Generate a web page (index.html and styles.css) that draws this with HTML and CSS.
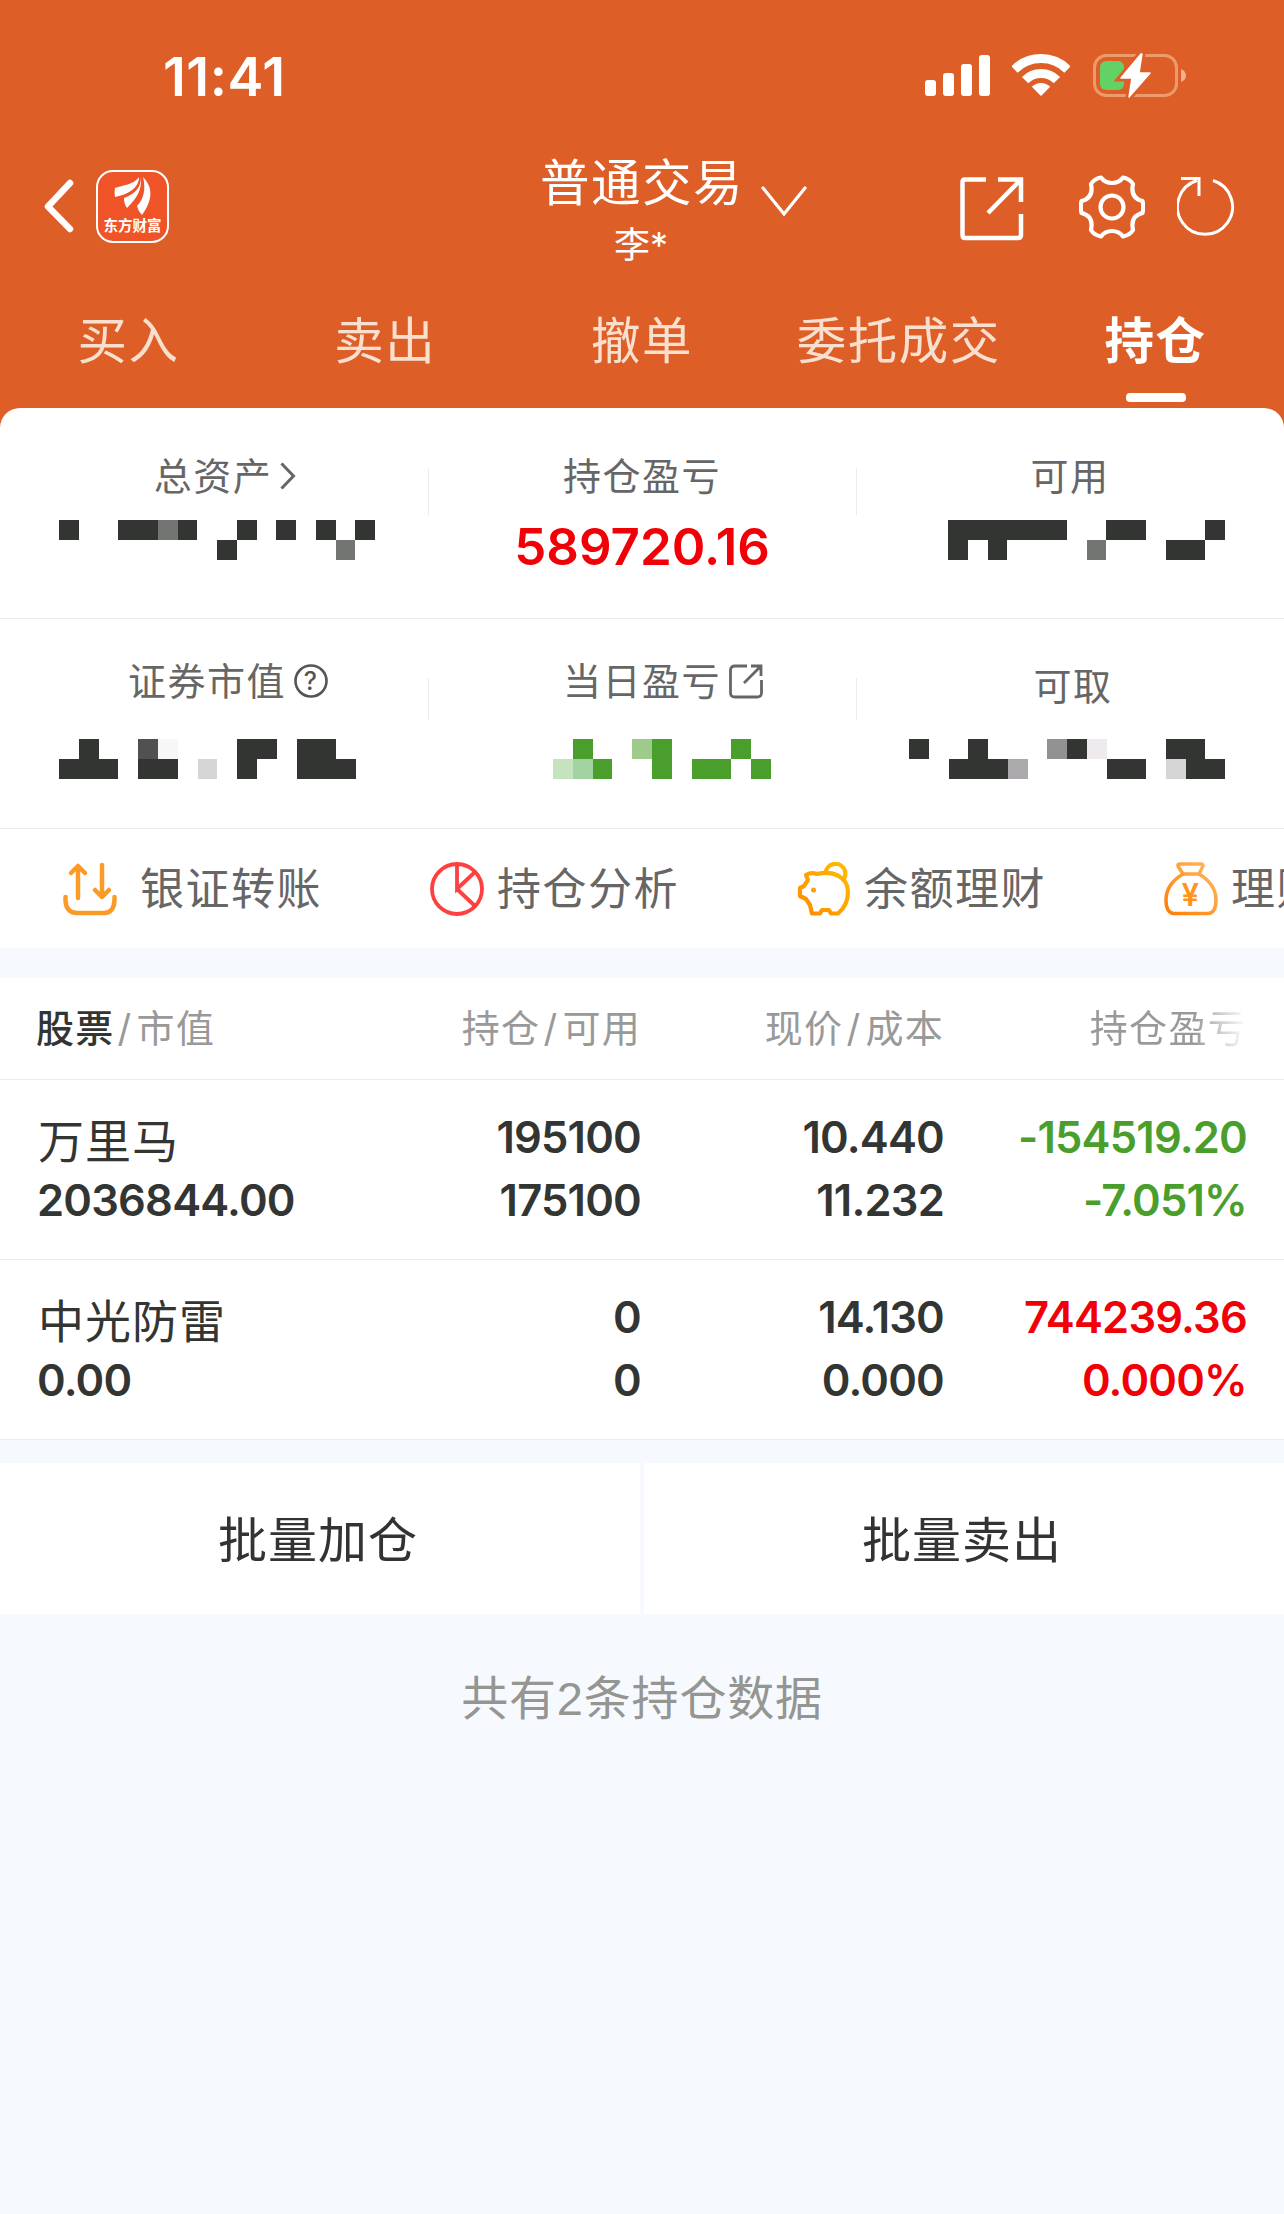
FILE: index.html
```html
<!DOCTYPE html>
<html lang="zh">
<head>
  <meta charset="UTF-8">
  <title>普通交易</title>
  <link rel="stylesheet" href="styles.css">
</head>
<body>

<header class="header">
  <div class="status-bar">
    <span class="time">11:41</span>
    <div class="status-icons">
      <svg class="signal" width="65" height="41" viewBox="0 0 65 41" fill="#fff">
        <rect x="0" y="25" width="11" height="16" rx="3"/>
        <rect x="18" y="18" width="11" height="23" rx="3"/>
        <rect x="36" y="9" width="11" height="32" rx="3"/>
        <rect x="54" y="0" width="11" height="41" rx="3"/>
      </svg>
      <svg class="wifi" width="58" height="42" viewBox="0 0 58 42">
        <g fill="none" stroke="#fff" stroke-width="9">
          <path d="M2.5 15.5A37.5 37.5 0 0 1 55.5 15.5"/>
          <path d="M13.1 26.1A22.5 22.5 0 0 1 44.9 26.1"/>
        </g>
        <path fill="#fff" d="M29 42L19.8 32.8A13 13 0 0 1 38.2 32.8Z"/>
      </svg>
      <svg width="94" height="46" viewBox="0 0 94 46">
        <rect x="1.5" y="3.5" width="82" height="40" rx="12" fill="none" stroke="#eb9c6d" stroke-width="3"/>
        <path d="M88 17Q93 19 93 23.500T88 30Z" fill="#f0af90"/>
        <rect x="7" y="9" width="24" height="29" rx="6" fill="#63d163"/>
        <path d="M48 2L28 26H39L36 45L57 21H46L49 2Z" fill="#fff" stroke="#de5e28" stroke-width="7"/>
        <path d="M48 2L28 26H39L36 45L57 21H46L49 2Z" fill="#fff" stroke="#fff" stroke-width="1.500" stroke-linejoin="round"/>
      </svg>
    </div>
  </div>

  <div class="nav">
    <div class="nav-left">
      <svg width="32" height="56" viewBox="0 0 32 56" fill="none" stroke="#fff" stroke-width="6.500" stroke-linecap="round" stroke-linejoin="round">
        <path d="M27 5L5 28.500L27 51"/>
      </svg>
      <div class="logo">
        <svg width="38" height="40" viewBox="0 0 38 40" fill="#fff">
          <path d="M1 12C9 9 19 9 25 1C25 12 15 18 1 21Q0 16 1 12Z"/>
          <path d="M27 1C28 14 23 22 13 32Q10 28 10 22C20 18 27 13 27 1Z"/>
          <path d="M29 1C40 12 38 25 28 39Q24 35 23 30C30 23 32 12 29 1Z"/>
        </svg>
        <span>东方财富</span>
      </div>
    </div>
    <div class="nav-title">
      <div class="title">普通交易</div>
      <div class="user">李*</div>
      <svg class="title-arrow" width="46" height="31" viewBox="0 0 46 31" fill="none" stroke="#fff" stroke-width="3.200" stroke-linecap="round">
        <path d="M2 2L23 28L44 2"/>
      </svg>
    </div>
    <div class="nav-right">
      <svg class="icon-share" width="64" height="64" viewBox="0 0 64 64" fill="none" stroke="#fff" stroke-width="4.500">
        <path d="M26 2.500H5Q2.500 2.500 2.500 5V58Q2.500 61 5 61H58Q61 61 61 58V37"/>
        <path d="M38 2.500H61V25M61 2.500L28 36"/>
      </svg>
      <svg class="icon-gear" width="66" height="64" viewBox="0 0 66 64" fill="none" stroke="#fff" stroke-width="4.200" stroke-linejoin="round">
        <path d="M22 2.500Q26 8 33 8T44 2.500Q51 4 54 9Q51 23 63.500 26Q65 32 63.500 38Q51 41 54 55Q51 60 44 61.500Q40 56 33 56T22 61.500Q15 60 12 55Q15 41 2.500 38Q1 32 2.500 26Q15 23 12 9Q15 4 22 2.500Z"/>
        <circle cx="33" cy="32" r="11.500"/>
      </svg>
      <svg class="icon-refresh" width="60" height="60" viewBox="0 0 60 60" fill="none" stroke="#fff" stroke-width="3">
        <path d="M36 4.500A27.500 27.500 0 1 1 20 4.500"/>
        <path d="M4 2.500H22V20"/>
      </svg>
    </div>
  </div>

  <nav class="tabs">
    <a class="tab">买入</a>
    <a class="tab">卖出</a>
    <a class="tab">撤单</a>
    <a class="tab">委托成交</a>
    <a class="tab active">持仓</a>
  </nav>
</header>

<section class="summary">
  <div class="summary-row">
    <div class="cell">
      <div class="label label-total">总资产
        <svg width="16" height="28" viewBox="0 0 16 28" fill="none" stroke="#666" stroke-width="3"><path d="M1.500 1.500L13.500 14L1.500 26.500"/></svg>
      </div>
      <svg class="mask mask-left" width="316" height="40" viewBox="0 0 16 2" preserveAspectRatio="none" shape-rendering="crispEdges">
        <path fill="#333532" d="M0 0h1v1H0zM3 0h2v1H3zM6 0h1v1H6zM9 0h1v1H9zM11 0h1v1H11zM13 0h1v1H13zM15 0h1v1H15zM8 1h1v1H8z"/>
        <path fill="#737572" d="M5 0h1v1H5zM14 1h1v1H14z"/>
      </svg>
    </div>
    <div class="cell">
      <div class="label">持仓盈亏</div>
      <div class="profit red">589720.16</div>
    </div>
    <div class="cell">
      <div class="label">可用</div>
      <svg class="mask mask-available" width="277" height="40" viewBox="0 0 14 2" preserveAspectRatio="none" shape-rendering="crispEdges">
        <path fill="#333532" d="M0 0h6v1H3v1H2V1H1v1H0zM8 0h2v1H8zM13 0h1v1H13zM11 1h2v1H11z"/>
        <path fill="#737572" d="M7 1h1v1H7z"/>
      </svg>
    </div>
  </div>

  <div class="summary-row second">
    <div class="cell">
      <div class="label label-market">证券市值
        <svg width="34" height="34" viewBox="0 0 34 34"><circle cx="17" cy="17" r="15.500" fill="none" stroke="#555" stroke-width="2.600"/><text class="question" x="17" y="26" text-anchor="middle">?</text></svg>
      </div>
      <svg class="mask mask-left" width="297" height="40" viewBox="0 0 15 2" preserveAspectRatio="none" shape-rendering="crispEdges">
        <path fill="#333532" d="M1 0h1v1h1v1H0V1h1zM4 1h2v1H4zM9 0h2v1h-1v1H9zM12 0h2v1h1v1h-3z"/>
        <path fill="#515151" d="M4 0h1v1H4z"/>
        <path fill="#f7f7f7" d="M5 0h1v1H5z"/>
        <path fill="#d6d6d6" d="M7 1h1v1H7z"/>
      </svg>
    </div>
    <div class="cell">
      <div class="label label-day">当日盈亏
        <svg width="34" height="35" viewBox="0 0 34 35" fill="none" stroke="#666" stroke-width="2.800"><path d="M18 2H6Q1.500 2 1.500 6V29Q1.500 33 6 33H28Q32.500 33 32.500 29V16M22 2H32V12M32 2L15 19"/></svg>
      </div>
      <svg class="mask mask-day" width="218" height="40" viewBox="0 0 11 2" preserveAspectRatio="none" shape-rendering="crispEdges">
        <path fill="#4a9e2b" d="M1 0h1v1H1zM2 1h1v1H2zM5 0h1v2H5zM9 0h1v1H9zM7 1h2v1H7zM10 1h1v1H10z"/>
        <path fill="#9ecb8c" d="M4 0h1v1H4z"/>
        <path fill="#c6e3bf" d="M0 1h1v1H0z"/>
        <path fill="#a3d3a0" d="M1 1h1v1H1z"/>
      </svg>
    </div>
    <div class="cell">
      <div class="label label-cash">可取</div>
      <svg class="mask mask-cash" width="316" height="40" viewBox="0 0 16 2" preserveAspectRatio="none" shape-rendering="crispEdges">
        <path fill="#333532" d="M0 0h1v1H0zM3 0h1v1h1v1H2V1h1zM8 0h1v1H8zM10 1h2v1h-2zM13 0h2v1h1v1h-2V1h-1z"/>
        <path fill="#aba9ab" d="M5 1h1v1H5z"/>
        <path fill="#949194" d="M7 0h1v1H7z"/>
        <path fill="#eeeaee" d="M9 0h1v1H9z"/>
        <path fill="#d6d6d6" d="M13 1h1v1h-1z"/>
      </svg>
    </div>
  </div>

  <div class="actions">
    <div class="action action-transfer">
      <svg width="56" height="54" viewBox="0 0 56 54" fill="none" stroke="#fb9b27" stroke-width="4.500" stroke-linecap="round" stroke-linejoin="round">
        <path d="M15 36V4M8 11L15 4L22 11M39 3V35M32 28L39 35L46 28M2.500 35V38Q3 51 14 51H41Q51 51 51.500 38V35"/>
      </svg>
      <span>银证转账</span>
    </div>
    <div class="action">
      <svg width="54" height="54" viewBox="0 0 54 54" fill="none" stroke="#ff4040" stroke-width="3.800">
        <circle cx="27" cy="27" r="25"/>
        <path d="M27 2V27L45 10M27 27L45 44"/>
      </svg>
      <span>持仓分析</span>
    </div>
    <div class="action">
      <svg width="54" height="54" viewBox="0 0 54 54" fill="none" stroke="url(#pig)" stroke-width="4.200" stroke-linejoin="round">
        <defs>
          <linearGradient id="pig" x1="0" y1="54" x2="54" y2="0" gradientUnits="userSpaceOnUse"><stop offset="0" stop-color="#ff8800"/><stop offset="1" stop-color="#ffbf00"/></linearGradient>
        </defs>
        <path d="M9 13Q14 10 20 12C36 8 51 15 51 30Q51 43 41 51.500H34L32 48H25L23 51.500H15L13 43L9 37L3 34V26L7 24L11 18Z"/>
        <path d="M28 12C30 -1 45 -1 48 9Q49 13 47 17"/>
        <circle cx="16.500" cy="28" r="2.500" fill="#ffa000" stroke="none"/>
      </svg>
      <span>余额理财</span>
    </div>
    <div class="action">
      <svg width="54" height="54" viewBox="0 0 54 54" fill="none" stroke="url(#bag)" stroke-width="3.500" stroke-linejoin="round">
        <defs>
          <linearGradient id="bag" x1="0" y1="54" x2="54" y2="0" gradientUnits="userSpaceOnUse"><stop offset="0" stop-color="#ff7a00"/><stop offset="1" stop-color="#ffbd68"/></linearGradient>
        </defs>
        <path d="M14 3Q14 2 16 2H37Q39 2 39 4L35 12H19L14 4Z"/>
        <path d="M19 12C9 18 2 27 2 38Q2 51 10 51.500H44Q52 51 52 38C52 27 45 18 35 12"/>
        <text class="yen" x="27" y="44" text-anchor="middle">¥</text>
      </svg>
      <span>理财</span>
    </div>
  </div>
</section>

<section class="holdings">
  <div class="row table-head">
    <span class="col-name"><b>股票</b><i>/</i>市值</span>
    <span>持仓<i>/</i>可用</span>
    <span>现价<i>/</i>成本</span>
    <span><em>持仓盈亏</em></span>
  </div>
  <div class="row stock">
    <div class="col-name"><p class="name">万里马</p><p>2036844.00</p></div>
    <div><p>195100</p><p>175100</p></div>
    <div><p>10.440</p><p>11.232</p></div>
    <div class="green"><p>-154519.20</p><p>-7.051%</p></div>
  </div>
  <div class="row stock">
    <div class="col-name"><p class="name">中光防雷</p><p>0.00</p></div>
    <div><p>0</p><p>0</p></div>
    <div><p>14.130</p><p>0.000</p></div>
    <div class="red"><p>744239.36</p><p>0.000%</p></div>
  </div>
</section>

<div class="buttons">
  <button class="btn">批量加仓</button>
  <button class="btn">批量卖出</button>
</div>

<p class="footer">共有<span>2</span>条持仓数据</p>

</body>
</html>
```
FILE: styles.css
```css
* {
  box-sizing: border-box;
}
body {
  margin: 0;
  min-height: 2214px;
  background: #f6faff;
  font-family: Inter, "Noto Sans CJK SC", sans-serif;
  color: #333532;
  overflow-x: hidden;
}
p {
  margin: 0;
}
svg {
  display: block;
  flex: none;
}
.red {
  color: #f20008;
}
.green {
  color: #4a9e2b;
}

/* header */
.header {
  height: 438px;
  background: #de5e28;
  color: #fff;
}
.status-bar {
  height: 150px;
  padding: 52px 97px 0 163px;
  display: flex;
  justify-content: space-between;
  align-items: flex-start;
}
.time {
  font-size: 54px;
  line-height: 50px;
  font-weight: 600;
  letter-spacing: 0.5px;
}
.status-icons {
  display: flex;
  align-items: flex-start;
}
.signal {
  margin: 3px 22px 0 0;
}
.wifi {
  margin: 2px 23px 0 0;
}
.nav {
  height: 140px;
  display: grid;
  grid-template-columns: 1fr 1fr 1fr;
}
.nav-left {
  display: flex;
  padding: 20px 0 0 43px;
}
.nav-left > svg {
  margin-top: 8px;
}
.logo {
  width: 73px;
  height: 73px;
  margin-left: 21px;
  border: 2px solid #fff;
  border-radius: 17px;
  background: #ef5328;
  display: flex;
  flex-direction: column;
  align-items: center;
  padding-top: 4px;
}
.logo span {
  font-size: 14.5px;
  line-height: 20px;
  font-weight: 700;
  white-space: nowrap;
}
.nav-title {
  position: relative;
  text-align: center;
}
.title {
  font-size: 49.5px;
  line-height: 66px;
  letter-spacing: 1.5px;
}
.user {
  font-size: 36px;
  line-height: 58px;
  padding-right: 2px;
}
.title-arrow {
  position: absolute;
  left: 333px;
  top: 36px;
}
.nav-right {
  display: flex;
  justify-content: flex-end;
  padding: 25px 47px 0 0;
}
.icon-share {
  margin: 2px 55px 0 0;
}
.icon-gear {
  margin-right: 32px;
}
.icon-refresh {
  margin-top: 1px;
}
.tabs {
  height: 118px;
  display: grid;
  grid-template-columns: repeat(5, 1fr);
}
.tab {
  display: flex;
  flex-direction: column;
  align-items: center;
  font-size: 49.5px;
  line-height: 103px;
  letter-spacing: 1.5px;
  color: #f9dfce;
}
.tab.active {
  color: #fff;
  font-weight: 700;
}
.tab.active::after {
  content: "";
  width: 60px;
  height: 9px;
  border-radius: 4px;
  background: #fff;
}

/* asset summary */
.summary {
  margin-top: -30px;
  height: 540px;
  background: #fff;
  border-radius: 20px 20px 0 0;
  overflow: hidden;
}
.summary-row {
  height: 211px;
  border-bottom: 1px solid #ebebeb;
  display: grid;
  grid-template-columns: repeat(3, 1fr);
}
.summary-row.second {
  height: 210px;
}
.cell {
  position: relative;
  display: flex;
  flex-direction: column;
  align-items: center;
  padding-top: 43px;
}
.second .cell {
  padding-top: 37px;
}
.cell + .cell::before {
  content: "";
  position: absolute;
  left: 0;
  top: 60px;
  width: 1px;
  height: 47px;
  background: #ebebeb;
}
.second .cell + .cell::before {
  top: 59px;
  height: 42px;
}
.label {
  display: flex;
  align-items: center;
  height: 50px;
  font-size: 38px;
  line-height: 50px;
  letter-spacing: 1.5px;
  color: #666;
  white-space: nowrap;
}
.label svg {
  margin-left: 8px;
}
.label-total {
  margin-left: 22px;
}
.label-market {
  margin-left: 28px;
}
.label-day {
  margin-left: 42px;
}
.label-cash {
  margin-left: 6px;
  padding-top: 10px;
}
.question {
  font-size: 25px;
  font-weight: 500;
  fill: #555;
}
.mask {
  align-self: flex-start;
  margin-top: 19px;
}
.second .mask {
  margin-top: 33px;
}
.mask-left {
  margin-left: 59px;
}
.mask-available {
  margin-left: 92px;
}
.mask-day {
  margin-left: 125px;
}
.mask-cash {
  margin-left: 53px;
}
.profit {
  margin-top: 16px;
  font-size: 51px;
  line-height: 60px;
  font-weight: 600;
}

/* shortcuts */
.actions {
  height: 119px;
  padding-left: 63px;
  display: flex;
}
.action {
  flex: 0 0 367px;
  display: flex;
  align-items: center;
  gap: 13px;
  font-size: 44px;
  letter-spacing: 1.5px;
  line-height: 60px;
  color: #666;
  white-space: nowrap;
}
.action-transfer {
  gap: 21px;
}
.yen {
  font-size: 31px;
  font-weight: 600;
  fill: #ff9520;
  stroke: none;
}

/* holdings table */
.holdings {
  margin-top: 30px;
  background: #fff;
}
.row {
  display: grid;
  grid-template-columns: 300px 304px 303px 303px;
  padding: 0 37px;
  text-align: right;
  border-bottom: 1px solid #ebebeb;
}
.row .col-name {
  text-align: left;
}
.table-head {
  height: 102px;
  font-size: 38px;
  letter-spacing: 1.3px;
  line-height: 101px;
  color: #999;
}
.table-head .col-name {
  margin-left: -1px;
}
.table-head b {
  font-weight: 500;
  color: #333532;
}
.table-head i {
  font-style: normal;
  margin: 0 4px 0 3px;
}
.table-head em {
  font-style: normal;
  color: transparent;
  background: linear-gradient(to right, #999 66%, #fff 100%);
  -webkit-background-clip: text;
  background-clip: text;
}
.stock {
  height: 180px;
  padding-top: 26px;
  font-size: 43.5px;
  line-height: 63px;
  font-weight: 600;
  letter-spacing: -0.8px;
}
.stock .name {
  padding-left: 1px;
  font-size: 46px;
  font-weight: 400;
  letter-spacing: 1px;
  line-height: 70px;
  height: 63px;
}

/* bottom buttons */
.buttons {
  margin-top: 23px;
  height: 151px;
  display: grid;
  grid-template-columns: 1fr 1fr;
  gap: 4px;
}
.btn {
  border: none;
  background: #fff;
  padding: 0 4px 4px 0;
  font-family: inherit;
  font-size: 49px;
  letter-spacing: 1px;
  color: #333;
}
.footer {
  padding-top: 54px;
  text-align: center;
  font-size: 47px;
  letter-spacing: 0.8px;
  line-height: 60px;
  color: #959592;
}
.footer span {
  font-family: "Liberation Sans", sans-serif;
}
```
